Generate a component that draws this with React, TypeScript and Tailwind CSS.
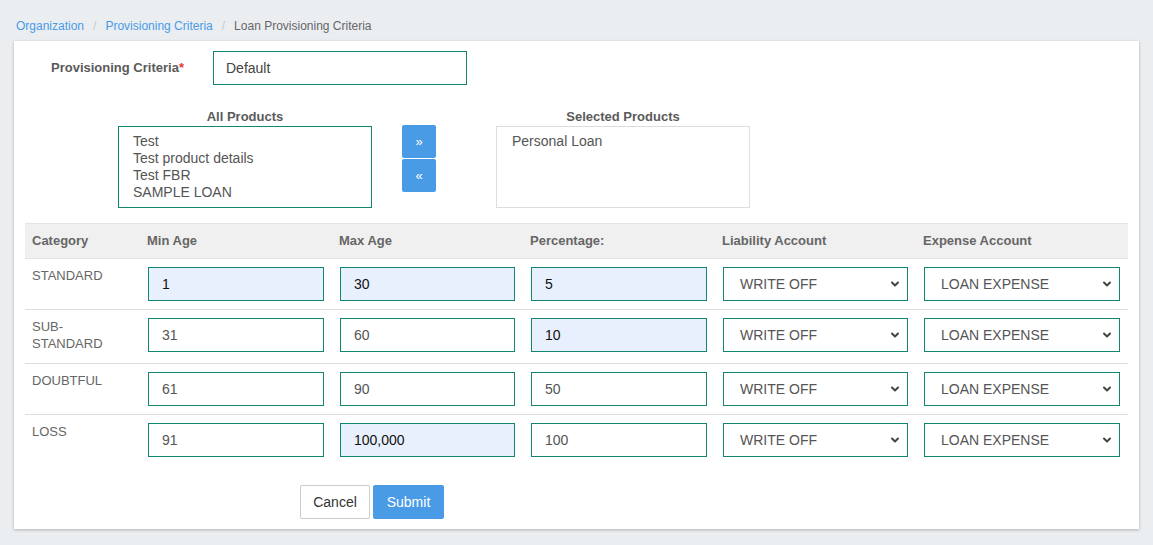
import { ChevronDown } from 'lucide-react'

const rows = [
  { category: 'STANDARD', min: '1', max: '30', pct: '5', filled: [true, true, true] },
  { category: 'SUB-STANDARD', min: '31', max: '60', pct: '10', filled: [false, false, true] },
  { category: 'DOUBTFUL', min: '61', max: '90', pct: '50', filled: [false, false, false] },
  { category: 'LOSS', min: '91', max: '100,000', pct: '100', filled: [false, true, false] },
]

function Field({ value, filled }: { value: string; filled: boolean }) {
  return (
    <div
      className={
        'h-[34px] border border-[#12876f] px-[13px] flex items-center text-[14px] ' +
        (filled ? 'bg-[#e8f0fe] text-[#111]' : 'bg-white text-[#555]')
      }
    >
      {value}
    </div>
  )
}

function Select({ value }: { value: string }) {
  return (
    <div className="h-[34px] border border-[#12876f] bg-white pl-[16px] pr-[6px] flex items-center justify-between text-[14px] text-[#555]">
      <span>{value}</span>
      <ChevronDown className="w-[12px] h-[12px] text-[#444]" strokeWidth={4} />
    </div>
  )
}

export default function App() {
  return (
    <div className="min-h-[545px] bg-[#ebeef1] px-[14px] pt-[18px] pb-[16px] font-['Liberation_Sans',Arial,sans-serif]">
      {/* breadcrumb */}
      <div className="flex items-center text-[12px] pl-[2px] h-[15px]">
        <span className="text-[#4a9be6]">Organization</span>
        <span className="text-[#c8c8c8] mx-[9px]">/</span>
        <span className="text-[#4a9be6]">Provisioning Criteria</span>
        <span className="text-[#c8c8c8] mx-[9px]">/</span>
        <span className="text-[#666]">Loan Provisioning Criteria</span>
      </div>

      <div className="mt-[8px] bg-white shadow-[0_1px_3px_rgba(0,0,0,0.25)] px-[11px] pt-[10px] pb-[10px]">
        {/* criteria name */}
        <div className="flex items-center h-[34px]">
          <label className="w-[188px] pl-[26px] text-[13px] font-bold text-[#5a5a5a]">
            Provisioning Criteria<span className="text-[#e53935]">*</span>
          </label>
          <div className="w-[254px] h-[34px] border border-[#12876f] px-[12px] flex items-center text-[14px] text-[#444]">
            Default
          </div>
        </div>

        {/* product pickers */}
        <div className="flex mt-[23px]">
          <div className="ml-[93px] w-[254px]">
            <div className="text-center text-[13px] font-bold text-[#5a5a5a] h-[17px] leading-[17px]">All Products</div>
            <div className="mt-[1px] h-[82px] border border-[#12876f] pl-[14px] pt-[6px] text-[14px] leading-[17px] text-[#555]">
              <div>Test</div>
              <div>Test product details</div>
              <div>Test FBR</div>
              <div>SAMPLE LOAN</div>
            </div>
          </div>
          <div className="ml-[30px] mt-[17px] flex flex-col gap-[1px]">
            <button className="w-[34px] h-[33px] bg-[#4a9be6] rounded-[2px] text-white text-[13px] leading-none flex items-center justify-center">
              »
            </button>
            <button className="w-[34px] h-[33px] bg-[#4a9be6] rounded-[2px] text-white text-[13px] leading-none flex items-center justify-center">
              «
            </button>
          </div>
          <div className="ml-[60px] w-[254px]">
            <div className="text-center text-[13px] font-bold text-[#5a5a5a] h-[17px] leading-[17px]">Selected Products</div>
            <div className="mt-[1px] h-[82px] border border-[#ddd] pl-[15px] pt-[6px] text-[14px] leading-[17px] text-[#555]">
              Personal Loan
            </div>
          </div>
        </div>

        {/* criteria table */}
        <table className="w-[1103px] table-fixed border-collapse mt-[15px]">
          <colgroup>
            <col className="w-[115px]" />
            <col className="w-[192px]" />
            <col className="w-[191px]" />
            <col className="w-[192px]" />
            <col className="w-[201px]" />
            <col className="w-[212px]" />
          </colgroup>
          <thead>
            <tr className="bg-[#f0f0f0] border-t border-[#e4e4e4] border-b border-[#ddd] h-[35px]">
              {['Category', 'Min Age', 'Max Age', 'Percentage:', 'Liability Account', 'Expense Account'].map((h) => (
                <th key={h} className="text-left px-[7px] text-[13px] font-bold text-[#666]">
                  {h}
                </th>
              ))}
            </tr>
          </thead>
          <tbody>
            {rows.map((r, i) => (
              <tr key={r.category} className={i < rows.length - 1 ? 'border-b border-[#ddd]' : ''}>
                <td className="align-top px-[7px] pt-[8px] pb-[11px] text-[13px] leading-[17px] text-[#666]">
                  {r.category === 'SUB-STANDARD' ? (
                    <>
                      SUB-
                      <br />
                      STANDARD
                    </>
                  ) : (
                    r.category
                  )}
                </td>
                <td className="align-top px-[8px] py-[8px]">
                  <Field value={r.min} filled={r.filled[0]} />
                </td>
                <td className="align-top px-[8px] py-[8px]">
                  <Field value={r.max} filled={r.filled[1]} />
                </td>
                <td className="align-top px-[8px] py-[8px]">
                  <Field value={r.pct} filled={r.filled[2]} />
                </td>
                <td className="align-top px-[8px] py-[8px]">
                  <Select value="WRITE OFF" />
                </td>
                <td className="align-top px-[8px] py-[8px]">
                  <Select value="LOAN EXPENSE" />
                </td>
              </tr>
            ))}
          </tbody>
        </table>

        {/* actions */}
        <div className="flex gap-[3px] ml-[275px] mt-[20px]">
          <button className="w-[70px] h-[34px] border border-[#ccc] rounded-[2px] bg-white text-[14px] text-[#333]">
            Cancel
          </button>
          <button className="w-[71px] h-[34px] bg-[#4a9be6] rounded-[2px] text-[14px] text-white">
            Submit
          </button>
        </div>
      </div>
    </div>
  )
}
